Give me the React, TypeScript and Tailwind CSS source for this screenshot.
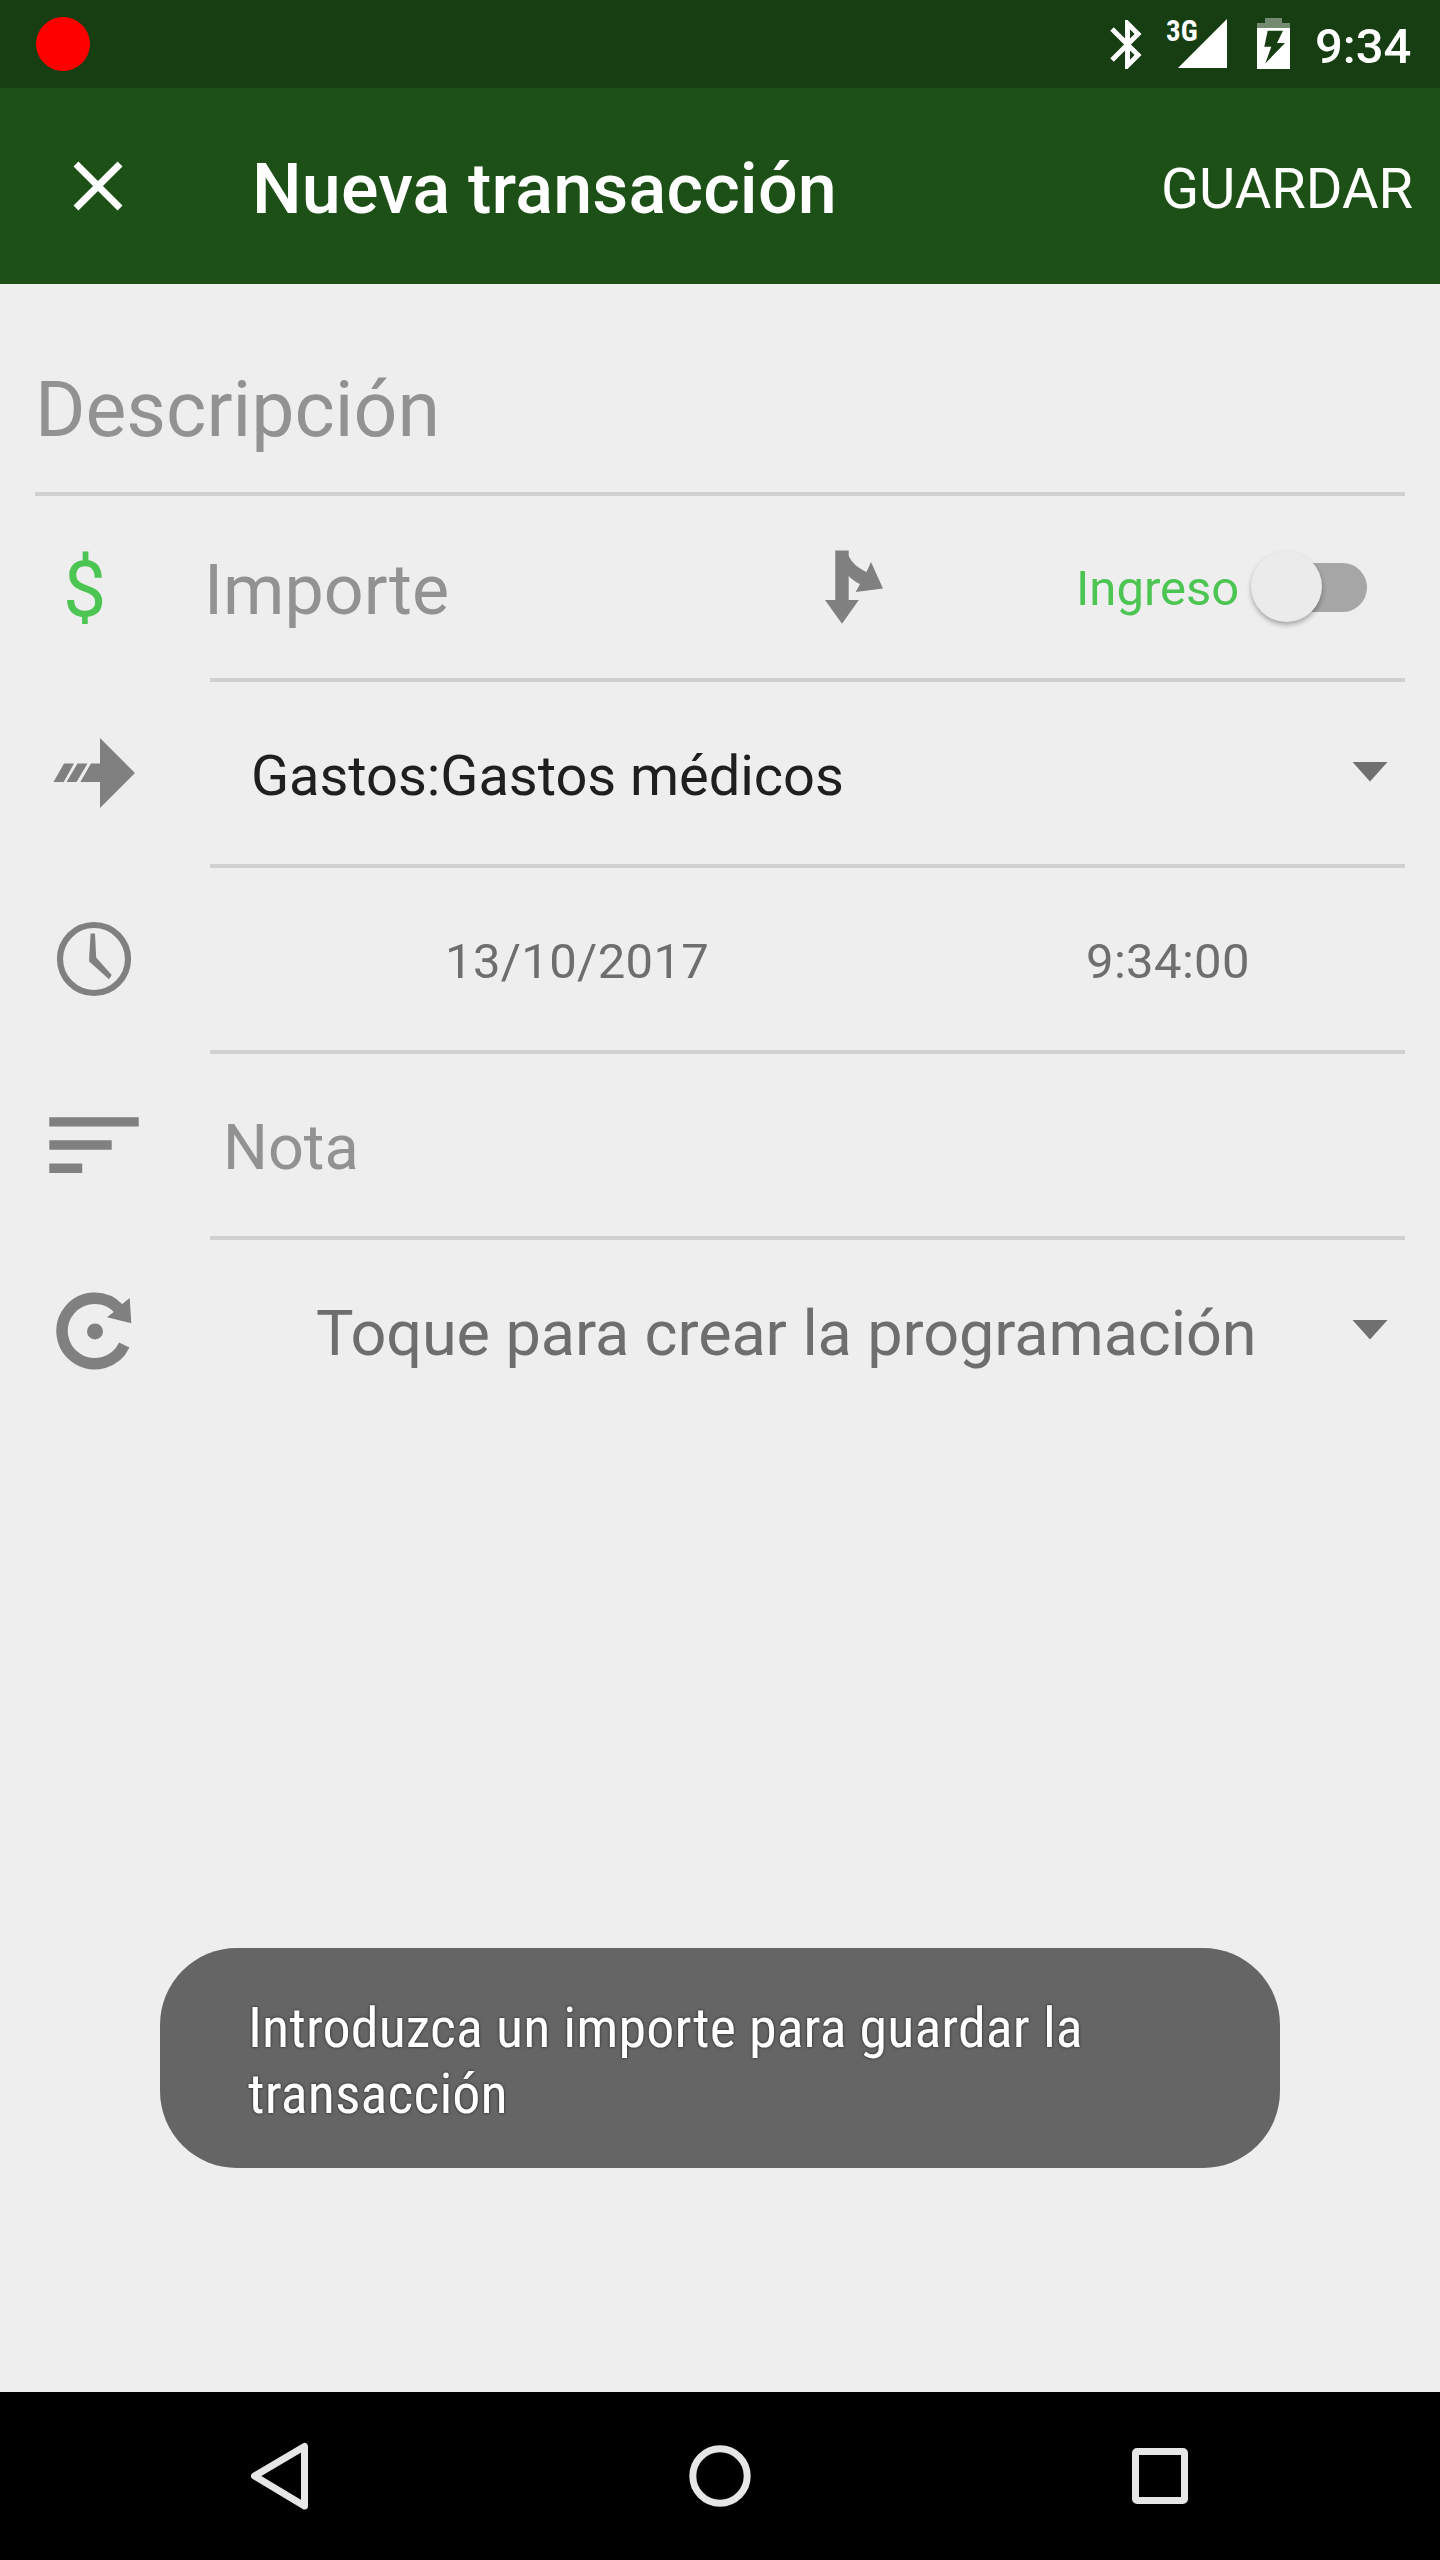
import type { ReactNode } from 'react';

function StatusBar() {
  return (
    <div className="flex h-[88px] items-start bg-[#173d12] text-white">
      <div className="mt-[17px] ml-[36px] h-[54px] w-[54px] rounded-full bg-[#ff0000]" />
      <svg className="mt-[15px] ml-auto h-[59px] w-[59px]" viewBox="0 0 24 24" fill="currentColor">
        <path d="M17.71 7.71L12 2h-1v7.59L6.41 5 5 6.41 10.59 12 5 17.59 6.41 19 11 14.41V22h1l5.71-5.71-4.3-4.29 4.3-4.29zM13 5.83l1.88 1.88L13 9.59V5.83zm1.88 10.46L13 18.17v-3.76l1.88 1.88z" />
      </svg>
      <div className="relative ml-[9px] h-[88px] w-[60px]">
        <span className="absolute top-[14px] left-0 font-['Roboto_Condensed'] text-[29px] leading-[34px] font-bold">3G</span>
        <svg className="absolute top-[19px] left-[12px] h-[49px] w-[49px]" viewBox="0 0 49 49" fill="currentColor">
          <path d="M49 0V49H0z" />
        </svg>
      </div>
      <svg className="mt-[18px] ml-[31px] h-[51px] w-[33px]" viewBox="0 0 33 51">
        <path d="M8 0H25V5H33V10H0V5H8z" fill="#748b71" />
        <path fillRule="evenodd" d="M0 10H33V51H0zM10.7 12.7L7.3 28.7H14.3L8.3 45.5L28 25H20L26 12.7z" fill="#fff" />
      </svg>
      <span className="mt-[18px] mr-[28px] ml-[25px] w-[97px] text-[49px] leading-[57px] font-medium whitespace-nowrap">9:34</span>
    </div>
  );
}

function AppBar() {
  return (
    <div className="flex h-[196px] items-start bg-[#1d5017] text-white">
      <svg className="mt-[56px] ml-[56px] h-[84px] w-[84px]" viewBox="0 0 24 24" fill="currentColor">
        <path d="M19 6.41L17.59 5 12 10.59 6.41 5 5 6.41 10.59 12 5 17.59 6.41 19 12 13.41 17.59 19 19 17.59 13.41 12z" />
      </svg>
      <h1 className="mt-[60px] ml-[112px] text-[70px] leading-[82px] font-medium tracking-[0.18px] whitespace-nowrap">Nueva transacción</h1>
      <button className="mt-[68px] mr-[27px] ml-auto text-[56px] leading-[66px]">GUARDAR</button>
    </div>
  );
}

function Row({ icon, children, last = false }: { icon: ReactNode; children: ReactNode; last?: boolean }) {
  return (
    <div className="flex h-[186px]">
      <div className="w-[210px] shrink-0">{icon}</div>
      <div className={last ? 'flex w-[1195px] items-start' : 'flex w-[1195px] items-start border-b-4 border-[#d0d0d0]'}>{children}</div>
    </div>
  );
}

function Caret() {
  return (
    <svg className="mt-[80px] mr-[17px] ml-auto h-[20px] w-[36px] text-[#707070]" viewBox="0 0 36 20" fill="currentColor">
      <path d="M.5 0H35.5L18 19.5z" />
    </svg>
  );
}

function SplitIcon() {
  return (
    <svg className="mt-[54px] ml-[85px] h-[74px] w-[59px] shrink-0" viewBox="0 0 59 74" fill="#808080">
      <path d="M10.3 .5H23.7V6C27 13 33 18 41.5 22L46 12L58 38.5L30.7 42L35 34C30.5 32 27 29.5 23.7 26V50H33.8L17 73.7L0 50H10.3z" />
    </svg>
  );
}

function TransferIcon() {
  return (
    <svg className="mt-[55px] ml-[53px] h-[72px] w-[83px]" viewBox="0 0 83 72" fill="#808080">
      <path d="M47 1L82 36L47 71V45H27.3L38 26.5H47z" />
      <path d="M24.5 26.5H34.5L23.5 45H13.5zM11 26.5H21L10.7 45H.5z" />
    </svg>
  );
}

function ClockIcon() {
  return (
    <svg className="mt-[53px] ml-[56px] h-[76px] w-[76px]" viewBox="0 0 76 76">
      <circle cx="38" cy="38" r="34" fill="none" stroke="#808080" strokeWidth="6.2" />
      <path d="M34.6 12.5H39L40.2 36.5L55.7 54L53 58.2L33.2 40.5V36z" fill="#808080" />
    </svg>
  );
}

function NoteIcon() {
  return (
    <svg className="mt-[63px] ml-[49px] h-[57px] w-[90px]" viewBox="0 0 90 57" fill="#808080">
      <path d="M.3 .2H89.7V9.5H.3zM.3 23.2H62.7V32.7H.3zM.3 46.5H33.2V56H.3z" />
    </svg>
  );
}

function RepeatIcon() {
  return (
    <svg className="mt-[51px] ml-[55px] h-[80px] w-[80px]" viewBox="0 0 80 80">
      <path d="M63.5 17.5A32.7 32.7 0 1 0 69.3 54" fill="none" stroke="#808080" strokeWidth="11.5" />
      <path d="M67.3 13L74.7 7L76.3 32.3L52 26.3L59 20.7z" fill="#808080" />
      <circle cx="40" cy="40.4" r="8" fill="#808080" />
    </svg>
  );
}

function Switch() {
  return (
    <div className="relative mt-[55px] ml-[11px] h-[71px] w-[116px] shrink-0">
      <div className="absolute top-[12px] right-0 h-[49px] w-[98px] rounded-full bg-[#a6a6a6]" />
      <div className="absolute top-0 left-0 h-[71px] w-[71px] rounded-full bg-[#ebebeb] shadow-[0_3px_5px_rgba(0,0,0,0.3)]" />
    </div>
  );
}

function NavBar() {
  return (
    <div className="flex h-[168px] items-start bg-black">
      <svg className="mt-[50px] ml-[249px] h-[70px] w-[60px]" viewBox="0 0 60 70" fill="none" stroke="#e6e6e6" strokeWidth="7" strokeLinejoin="round">
        <path d="M5.5 34L55.5 4.5V64z" />
      </svg>
      <svg className="mt-[52px] ml-[379px] h-[64px] w-[64px]" viewBox="0 0 64 64" fill="none" stroke="#e6e6e6" strokeWidth="7">
        <circle cx="32" cy="32" r="27.2" />
      </svg>
      <div className="mt-[56px] ml-[380px] h-[56px] w-[56px] rounded-[5px] border-[7px] border-[#e6e6e6]" />
    </div>
  );
}

export default function App() {
  return (
    <div className="relative flex h-[2560px] w-[1440px] flex-col overflow-hidden bg-[#eeeeee] font-['Roboto',sans-serif]">
      <StatusBar />
      <AppBar />
      <main className="flex-1">
        <div className="mx-[35px] h-[212px] border-b-4 border-[#d0d0d0] pt-[81px] text-[77px] leading-[90px] text-[#929292]">Descripción</div>
        <Row icon={<div className="mt-[49px] ml-[63px] text-[77px] leading-[90px] text-[#4cc552]">$</div>}>
          <span className="mt-[53px] -ml-[6px] w-[536px] shrink-0 text-[70px] leading-[82px] text-[#929292]">Importe</span>
          <SplitIcon />
          <span className="mt-[64px] ml-[192px] w-[164px] shrink-0 text-[49px] leading-[57px] text-[#4cc552]">Ingreso</span>
          <Switch />
        </Row>
        <Row icon={<TransferIcon />}>
          <span className="mt-[61px] ml-[41px] text-[56px] leading-[66px] tracking-[-0.05px] whitespace-nowrap text-[#1f1f1f]">Gastos:Gastos médicos</span>
          <Caret />
        </Row>
        <Row icon={<ClockIcon />}>
          <span className="mt-[65px] ml-[235px] w-[641px] text-[49px] leading-[57px] tracking-[0.35px] text-[#6e6e6e]">13/10/2017</span>
          <span className="mt-[65px] text-[49px] leading-[57px] tracking-[0.35px] text-[#6e6e6e]">9:34:00</span>
        </Row>
        <Row icon={<NoteIcon />}>
          <span className="mt-[57px] ml-[13px] text-[63px] leading-[73px] text-[#929292]">Nota</span>
        </Row>
        <Row icon={<RepeatIcon />} last>
          <span className="mt-[57px] ml-[106px] text-[63px] leading-[73px] tracking-[-0.1px] whitespace-nowrap text-[#6e6e6e]">Toque para crear la programación</span>
          <Caret />
        </Row>
      </main>
      <div className="absolute top-[1948px] left-[160px] h-[220px] w-[1120px] rounded-[77px] bg-[#656565] pt-[47px] pl-[88px] font-['Roboto_Condensed',Roboto,sans-serif] text-[56px] leading-[66px] tracking-[0.1px] text-white [text-shadow:0_0_3px_rgba(0,0,0,0.73)]">
        <p className="w-[900px]">Introduzca un importe para guardar la transacción</p>
      </div>
      <NavBar />
    </div>
  );
}
